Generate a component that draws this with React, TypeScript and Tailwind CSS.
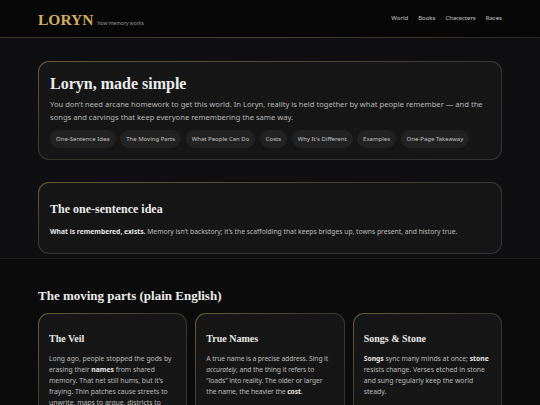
import React from "react";

const serif = { fontFamily: '"Liberation Serif", Georgia, serif' };

const chips = [
  "One-Sentence Idea",
  "The Moving Parts",
  "What People Can Do",
  "Costs",
  "Why It's Different",
  "Examples",
  "One-Page Takeaway",
];

function GoldCard({ children, className = "" }: { children: React.ReactNode; className?: string }) {
  return (
    <div className="rounded-[11px] bg-gradient-to-br from-[#6a5a38] via-[#3a362e] to-[#333236] p-px">
      <div className={"rounded-[10px] bg-[#161616] " + className}>{children}</div>
    </div>
  );
}

export default function App() {
  return (
    <div
      className="h-[405px] w-[540px] overflow-hidden bg-[#0b0b0b] text-[#cfcfcf]"
      style={{ fontFamily: '"Noto Sans", sans-serif' }}
    >
      {/* Header */}
      <header className="bg-[#070707]">
        <div className="flex h-[37px] items-center justify-between px-[38px]">
          <div className="flex items-baseline gap-[4px] pt-[2px]">
            <span className="text-[15.5px] font-bold leading-none text-[#cfae5e]" style={serif}>
              LORYN
            </span>
            <span className="text-[5px] leading-none text-[#9a9a9a]">how memory works</span>
          </div>
          <nav className="flex gap-[10px] text-[6px] text-[#c8c8c8]">
            <span>World</span>
            <span>Books</span>
            <span>Characters</span>
            <span>Races</span>
          </nav>
        </div>
        <div className="h-px bg-gradient-to-r from-[#3a3526] via-[#4a3f2a] to-[#2a2622]" />
      </header>

      {/* Intro section */}
      <section className="border-b border-[#1c1c1e] bg-[#0f0f11] px-[38px] pt-[23px] pb-[4px]">
        <GoldCard className="px-[11px] pt-[12px] pb-[11px]">
          <h1 className="text-[16px] font-bold leading-[20px] text-[#ececec]" style={serif}>
            Loryn, made simple
          </h1>
          <p className="mt-[4px] text-[7.6px] leading-[13px] text-[#b9b9b9]">
            You don’t need arcane homework to get this world. In Loryn, reality is held together by what people remember — and the songs and carvings that keep everyone remembering the same way.
          </p>
          <div className="mt-[6px] flex flex-wrap gap-[4.5px]">
            {chips.map((c) => (
              <span
                key={c}
                className="flex h-[18px] items-center rounded-full bg-[#222222] px-[6px] text-[6px] text-[#c2c2c2]"
              >
                {c}
              </span>
            ))}
          </div>
        </GoldCard>

        <div className="mt-[22px]">
          <GoldCard className="px-[11px] pt-[18px] pb-[16px]">
            <h2 className="text-[12px] font-bold leading-[16px] text-[#ececec]" style={serif}>
              The one-sentence idea
            </h2>
            <p className="mt-[9px] text-[6.75px] leading-[11px] text-[#bdbdbd]">
              <b className="font-bold text-[#e6e6e6]">What is remembered, exists.</b> Memory isn’t backstory; it’s the scaffolding that keeps bridges up, towns present, and history true.
            </p>
          </GoldCard>
        </div>
      </section>

      {/* Moving parts */}
      <section className="px-[38px] pt-[29px]">
        <h2 className="text-[13px] font-bold leading-[16px] text-[#ececec]" style={serif}>
          The moving parts (plain English)
        </h2>
        <div className="mt-[9px] grid grid-cols-3 gap-[8px]">
          <GoldCard className="h-[110px] pl-[10px] pr-[8px] pt-[18px]">
            <h3 className="text-[10px] font-bold leading-[14px] text-[#e8e8e8]" style={serif}>The Veil</h3>
            <p className="mt-[7px] text-[6.8px] leading-[11px] text-[#bdbdbd]">
              Long ago, people stopped the gods by erasing their <b className="text-[#e6e6e6]">names</b> from shared memory. That net still hums, but it’s fraying. Thin patches cause streets to unwrite, maps to argue, districts to vanish.
            </p>
          </GoldCard>
          <GoldCard className="h-[110px] pl-[10px] pr-[4px] pt-[18px]">
            <h3 className="text-[10px] font-bold leading-[14px] text-[#e8e8e8]" style={serif}>True Names</h3>
            <p className="mt-[7px] text-[6.8px] leading-[11px] tracking-[-0.12px] text-[#bdbdbd]">
              A true name is a precise address. Sing it <i>accurately</i>, and the thing it refers to
              <br />
              “loads” into reality. The older or larger
              <br />
              the name, the heavier the <b className="text-[#e6e6e6]">cost</b>.
            </p>
          </GoldCard>
          <GoldCard className="h-[110px] pl-[10px] pr-[8px] pt-[18px]">
            <h3 className="text-[10px] font-bold leading-[14px] text-[#e8e8e8]" style={serif}>Songs &amp; Stone</h3>
            <p className="mt-[7px] text-[6.8px] leading-[11px] text-[#bdbdbd]">
              <b className="text-[#e6e6e6]">Songs</b> sync many minds at once; <b className="text-[#e6e6e6]">stone</b> resists change. Verses etched in stone and sung regularly keep the world steady.
            </p>
          </GoldCard>
        </div>
      </section>
    </div>
  );
}
